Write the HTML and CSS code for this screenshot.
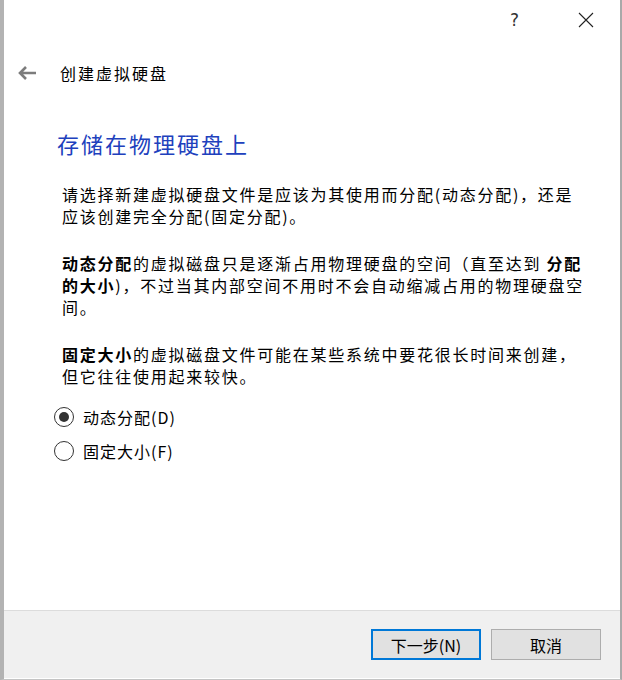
FILE: index.html
```html
<!doctype html>
<html>
  <head>
    <meta charset="utf-8">
    <link rel="stylesheet" href="styles.css">
  </head>
  <body>
    <div class="dialog">
      <div class="titlebar">
        <span class="help">?</span>
        <span class="close">
          <svg width="16" height="16" viewBox="0 0 16 16"><path d="M1 1 L15 15 M15 1 L1 15" stroke="#222" stroke-width="1.1" fill="none"/></svg>
        </span>
      </div>

      <div class="nav">
        <span class="back">
          <svg width="20" height="16" viewBox="0 0 20 16"><path d="M19 8 H3 M9 2 L3 8 L9 14" stroke="#7c7c7c" stroke-width="2.6" fill="none"/></svg>
        </span>
        <span class="nav-title">创建虚拟硬盘</span>
      </div>

      <div class="page">
        <h1 class="heading">存储在物理硬盘上</h1>

        <p>请选择新建虚拟硬盘文件是应该为其使用而分配(动态分配)，还是<br>应该创建完全分配(固定分配)。</p>

        <p><b>动态分配</b>的虚拟磁盘只是逐渐占用物理硬盘的空间（直至达到 <b>分配<br>的大小</b>)，不过当其内部空间不用时不会自动缩减占用的物理硬盘空<br>间。</p>

        <p><b>固定大小</b>的虚拟磁盘文件可能在某些系统中要花很长时间来创建，<br>但它往往使用起来较快。</p>

        <div class="options">
          <label class="option"><span class="radio checked"></span>动态分配(D)</label>
          <label class="option"><span class="radio"></span>固定大小(F)</label>
        </div>
      </div>

      <div class="footer">
        <div class="btn primary">下一步(N)</div>
        <div class="btn">取消</div>
      </div>
    </div>
  </body>
</html>
```

FILE: styles.css
```css
html, body {
  margin: 0;
  padding: 0;
  background: #fff;
}

body {
  font-family: "Noto Sans CJK SC", "Noto Sans", sans-serif;
  color: #000;
}

.dialog {
  width: 616px;
  height: 679px;
  border-left: 4px solid #b3b3b3;
  border-right: 2px solid #a9a9a9;
  border-bottom: 1px solid #c4c4c4;
  display: flex;
  flex-direction: column;
  background: #fff;
}

.titlebar {
  height: 40px;
  display: flex;
  align-items: center;
  justify-content: flex-end;
  padding-right: 26px;
  gap: 59px;
}

.help {
  font-family: "DejaVu Sans", sans-serif;
  font-size: 17px;
  color: #333;
  line-height: 1;
}

.close {
  display: flex;
}

.nav {
  margin-top: 15px;
  height: 36px;
  display: flex;
  align-items: center;
  padding-left: 13px;
}

.back {
  display: flex;
  width: 43px;
}

.nav-title {
  font-size: 16px;
  letter-spacing: 2px;
}

.page {
  flex: 1;
  padding-left: 58px;
  padding-right: 20px;
}

.heading {
  margin: 37px 0 0 -5px;
  font-weight: normal;
  font-size: 22px;
  line-height: 30px;
  letter-spacing: 2px;
  color: #2040bd;
}

.page p {
  margin: 25px 0 0;
  font-size: 16px;
  line-height: 22px;
  letter-spacing: 1.75px;
}

.page p b {
  font-weight: bold;
}

.options {
  margin-top: 13px;
  margin-left: -8px;
}

.option {
  display: flex;
  align-items: center;
  height: 34px;
  font-size: 16px;
  letter-spacing: 1px;
}

.radio {
  width: 18px;
  height: 18px;
  border: 1px solid #333;
  border-radius: 50%;
  margin-right: 9px;
  display: flex;
  align-items: center;
  justify-content: center;
  box-sizing: content-box;
}

.radio.checked::after {
  content: "";
  width: 10px;
  height: 10px;
  border-radius: 50%;
  background: #333;
}

.footer {
  height: 69px;
  border-top: 1px solid #dcdcdc;
  border-bottom: 1px solid #fff;
  background: #f0f0f0;
  display: flex;
  justify-content: flex-end;
  align-items: flex-start;
  padding: 18px 19px 0 0;
  gap: 10px;
  box-sizing: border-box;
}

.btn {
  width: 110px;
  height: 31px;
  box-sizing: border-box;
  border: 1px solid #adadad;
  background: #e1e1e1;
  font-size: 16px;
  display: flex;
  align-items: center;
  justify-content: center;
}

.btn.primary {
  border: 2px solid #0078d7;
}
```
